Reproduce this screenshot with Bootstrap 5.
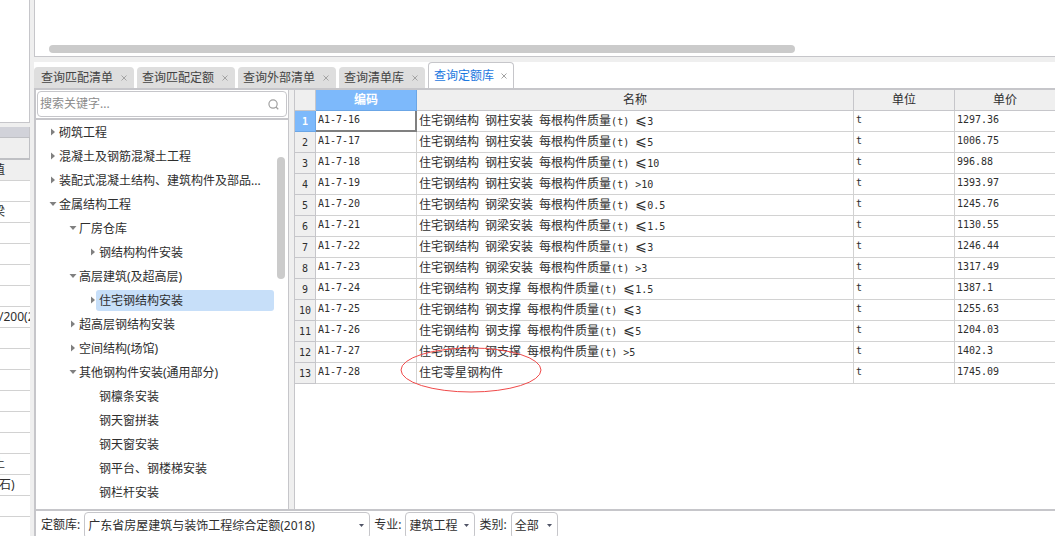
<!DOCTYPE html>
<html lang="zh-CN">
<head>
<meta charset="utf-8">
<meta name="viewport" content="width=device-width, initial-scale=1">
<title>查询定额库</title>
<link href="https://cdn.jsdelivr.net/npm/bootstrap@5.3.0/dist/css/bootstrap.min.css" rel="stylesheet">
<style>
  :root { --line: #c6c6ca; --grid: #d2d2d2; --chrome: #efefef; --accent: #7db9fb; }
  body { font: 12px/20px "Noto Sans", "Noto Sans CJK SC", sans-serif; color: #2e2e2e; background: var(--chrome); }

  /* property strip on the far left */
  .side-strip { width: 30px; white-space: nowrap; }
  .side-top { height: 123px; border-right: 1px solid var(--line); border-bottom: 1px solid var(--line); }
  .side-title { height: 10px; margin-top: 4px; background: #d1d2d9; border-right: 1px solid var(--line); }
  .side-tools { height: 23px; border: 1px solid #bfc0c4; border-left: 0; border-bottom-width: 2px; }
  .side-grid { table-layout: fixed; width: 100%; border-collapse: separate; border-spacing: 0; }
  .side-grid th, .side-grid td { height: 21px; padding: 0; line-height: 20px; font-weight: 400; overflow: hidden; border-bottom: 1px solid var(--grid); background: #fff; }
  .side-grid th { background: var(--chrome); }
  .side-grid span { margin-left: -7px; }
  .side-grid .near span { margin-left: -1px; }
  .splitter { width: 4px; }

  /* upper pane */
  .upper-pane { height: 57px; border-left: 1px solid var(--line); border-bottom: 1px solid var(--line); padding: 0 12px 3px 14px; }
  .h-thumb { width: 75%; height: 8px; border-radius: 4px; background: #cbcbcb; }

  /* query tabs */
  .tab-strip { height: 26px; margin-top: 5px; gap: 3px; }
  .query-tab { height: 21px; gap: 7px; padding: 0 6px 0 5px; background: #dedede; border: 0; border-radius: 4px 4px 0 0; color: #444; line-height: 21px; }
  .query-tab:first-child { padding-left: 7px; }
  .query-tab.active { height: 26px; gap: 6px; padding: 0 5px; background: #fff; border: 1px solid var(--line); border-bottom: 0; color: #1c78e0; line-height: 26px; }
  .query-tab svg { width: 8px; height: 8px; stroke: #a3a3a3; fill: none; }

  .work-area { border-top: 2px solid var(--line); border-left: 2px solid var(--line); min-height: 0; }

  /* tree */
  .tree-pane { width: 253px; border-right: 1px solid var(--line); }
  .search-row { padding: 1px; height: 30px; border-bottom: 2px solid var(--line); }
  .search-box { width: 100%; height: 26px; padding: 0 3px 0 2px; border: 1px solid var(--line); border-radius: 4px; }
  .search-box input { min-width: 0; border: 0; outline: 0; padding: 0; background: none; }
  .search-box input::placeholder { color: #8c8c8c; opacity: 1; }
  .search-box button { border: 0; background: none; padding: 0 4px; line-height: 0; }
  .tree-body { min-height: 0; padding-right: 14px; }
  .tree-list li { height: 24px; }
  .tree-list button { border: 0; background: none; padding: 0 3px; height: 21px; line-height: 21px; border-radius: 3px; color: inherit; text-align: left; white-space: nowrap; flex: 1; }
  .tree-list .picked button { background: #c7dff9; }
  .tree-list svg { width: 8px; height: 8px; fill: #808080; margin-right: -1px; }
  .lv-0 { padding-left: 13px; } .lv-1 { padding-left: 33px; } .lv-2 { padding-left: 53px; }
  .leaf { padding-left: 60px; }
  .v-thumb { position: absolute; top: 37px; right: 3px; width: 8px; height: 122px; border-radius: 4px; background: #cbcbcb; }

  /* quota grid */
  .grid-gap { width: 5px; background: var(--chrome); }
  .grid-pane { min-width: 0; border-left: 1px solid var(--line); }
  .quota { table-layout: fixed; width: 100%; border-collapse: separate; border-spacing: 0; white-space: nowrap; }
  .quota th, .quota td { height: 21px; padding: 0 2px 2px; border-right: 1px solid var(--grid); border-bottom: 1px solid var(--grid); vertical-align: middle; }
  .quota th { background: var(--chrome); border-color: var(--line); font-weight: 400; text-align: center; }
  .quota thead th { padding: 0; line-height: 20px; }
  .quota tbody th { font: 10px/18px "DejaVu Sans Mono", monospace; padding: 2px 0 0; }
  .quota td { font: 10px/18px "DejaVu Sans Mono", monospace; color: #2e2e2e; }
  .quota td.item { font: 12px/18px "Noto Sans CJK SC", sans-serif; white-space: pre; }
  .quota .mono { font: 10px/1 "DejaVu Sans Mono", monospace; }
  .quota .item i { font: 14px/1 "Noto Sans CJK SC", "DejaVu Sans", sans-serif; display: inline-block; width: 12px; height: 12px; line-height: 12px; text-align: center; }
  .quota th.on { background: var(--accent); border-color: #6ba6e6; color: #fff; font-weight: 700; }
  .quota td.current { border-color: #808080; box-shadow: inset -1px -1px #808080; }
  .quota tr > :last-child { border-right: 0; }
  .c-no { width: 21px; } .c-code, .c-unit { width: 101px; } .c-price { width: 100px; }
  .ring { position: absolute; left: -17px; top: -16px; width: 142px; height: 46px; fill: none; stroke: #f04a4a; pointer-events: none; }

  /* filters */
  .filters { height: 27px; border-top: 2px solid var(--line); border-left: 2px solid var(--line); padding: 1px 5px 0; }
  .filters label { line-height: 26px; margin-right: 4px; }
  .filters select { appearance: none; height: 27px; margin-right: 4px; padding: 0 3px; border: 1px solid var(--line); border-radius: 4px; color: inherit;
    background: #fff url("data:image/svg+xml,%3Csvg xmlns='http://www.w3.org/2000/svg' width='5' height='3'%3E%3Cpath d='M0 0h5L2.500 3z' fill='%23505466'/%3E%3C/svg%3E") no-repeat right 5px center; }
  .w-lib { width: 286px; } .w-major { width: 70px; } .w-kind { width: 47px; }
</style>
</head>
<body class="d-flex vh-100 overflow-hidden">
<svg class="d-none">
  <symbol id="x" viewBox="0 0 8 8"><path d="M1.500 1.500l5 5M6.500 1.500l-5 5"/></symbol>
  <symbol id="shut" viewBox="0 0 8 8"><path d="M2 .5v7L6 4z"/></symbol>
  <symbol id="open" viewBox="0 0 8 8"><path d="M.5 2h7L4 6z"/></symbol>
</svg>

<aside class="side-strip flex-shrink-0 overflow-hidden">
  <div class="side-top bg-white"></div>
  <div class="side-title"></div>
  <div class="side-tools"></div>
  <table class="side-grid">
    <thead><tr><th><span>值</span></th></tr></thead>
    <tbody>
      <tr><td></td></tr>
      <tr><td><span>梁</span></td></tr>
      <tr><td></td></tr><tr><td></td></tr><tr><td></td></tr><tr><td></td></tr>
      <tr><td class="near"><span>/200(2</span></td></tr>
      <tr><td></td></tr><tr><td></td></tr><tr><td></td></tr><tr><td></td></tr><tr><td></td></tr><tr><td></td></tr>
      <tr><td><span>土</span></td></tr>
      <tr><td class="near"><span>石)</span></td></tr>
      <tr><td></td></tr><tr><td></td></tr>
    </tbody>
  </table>
</aside>
<div class="splitter flex-shrink-0"></div>

<main class="d-flex flex-column flex-grow-1 overflow-hidden">
  <section class="upper-pane bg-white d-flex align-items-end flex-shrink-0"><div class="h-thumb"></div></section>

  <nav class="tab-strip bg-white d-flex align-items-end flex-shrink-0">
    <button class="query-tab d-flex align-items-center">查询匹配清单<svg><use href="#x"/></svg></button>
    <button class="query-tab d-flex align-items-center">查询匹配定额<svg><use href="#x"/></svg></button>
    <button class="query-tab d-flex align-items-center">查询外部清单<svg><use href="#x"/></svg></button>
    <button class="query-tab d-flex align-items-center">查询清单库<svg><use href="#x"/></svg></button>
    <button class="query-tab active d-flex align-items-center">查询定额库<svg><use href="#x"/></svg></button>
  </nav>

  <div class="work-area d-flex flex-grow-1 bg-white">
    <section class="tree-pane d-flex flex-column flex-shrink-0">
      <div class="search-row flex-shrink-0">
        <div class="search-box d-flex align-items-center">
          <input class="flex-grow-1" type="text" placeholder="搜索关键字..." aria-label="搜索关键字">
          <button aria-label="搜索"><svg width="11" height="11" viewBox="0 0 12 12" fill="none" stroke="#a0a0a0" stroke-width="1.300"><circle cx="5.500" cy="5.500" r="4.500"/><path d="M8.700 8.700l2.500 2.500"/></svg></button>
        </div>
      </div>
      <div class="tree-body position-relative flex-grow-1 overflow-hidden">
        <ul class="tree-list list-unstyled mb-0">
          <li class="lv-0 d-flex align-items-center"><svg><use href="#shut"/></svg><button>砌筑工程</button></li>
          <li class="lv-0 d-flex align-items-center"><svg><use href="#shut"/></svg><button>混凝土及钢筋混凝土工程</button></li>
          <li class="lv-0 d-flex align-items-center"><svg><use href="#shut"/></svg><button>装配式混凝土结构、建筑构件及部品...</button></li>
          <li class="lv-0 d-flex align-items-center"><svg><use href="#open"/></svg><button>金属结构工程</button></li>
          <li class="lv-1 d-flex align-items-center"><svg><use href="#open"/></svg><button>厂房仓库</button></li>
          <li class="lv-2 d-flex align-items-center"><svg><use href="#shut"/></svg><button>钢结构构件安装</button></li>
          <li class="lv-1 d-flex align-items-center"><svg><use href="#open"/></svg><button>高层建筑(及超高层)</button></li>
          <li class="lv-2 picked d-flex align-items-center"><svg><use href="#shut"/></svg><button>住宅钢结构安装</button></li>
          <li class="lv-1 d-flex align-items-center"><svg><use href="#shut"/></svg><button>超高层钢结构安装</button></li>
          <li class="lv-1 d-flex align-items-center"><svg><use href="#shut"/></svg><button>空间结构(场馆)</button></li>
          <li class="lv-1 d-flex align-items-center"><svg><use href="#open"/></svg><button>其他钢构件安装(通用部分)</button></li>
          <li class="leaf d-flex align-items-center"><button>钢檩条安装</button></li>
          <li class="leaf d-flex align-items-center"><button>钢天窗拼装</button></li>
          <li class="leaf d-flex align-items-center"><button>钢天窗安装</button></li>
          <li class="leaf d-flex align-items-center"><button>钢平台、钢楼梯安装</button></li>
          <li class="leaf d-flex align-items-center"><button>钢栏杆安装</button></li>
        </ul>
        <div class="v-thumb"></div>
      </div>
    </section>
    <div class="grid-gap flex-shrink-0"></div>
    <section class="grid-pane flex-grow-1 overflow-hidden">
      <table class="quota">
        <colgroup><col class="c-no"><col class="c-code"><col><col class="c-unit"><col class="c-price"></colgroup>
        <thead><tr><th></th><th class="on">编码</th><th>名称</th><th>单位</th><th>单价</th></tr></thead>
        <tbody>
          <tr><th class="on">1</th><td class="current">A1-7-16</td><td class="item">住宅钢结构<span class="mono"> </span>钢柱安装<span class="mono"> </span>每根构件质量<span class="mono">(t) </span><i>⩽</i><span class="mono">3</span></td><td>t</td><td>1297.36</td></tr>
          <tr><th>2</th><td>A1-7-17</td><td class="item">住宅钢结构<span class="mono"> </span>钢柱安装<span class="mono"> </span>每根构件质量<span class="mono">(t) </span><i>⩽</i><span class="mono">5</span></td><td>t</td><td>1006.75</td></tr>
          <tr><th>3</th><td>A1-7-18</td><td class="item">住宅钢结构<span class="mono"> </span>钢柱安装<span class="mono"> </span>每根构件质量<span class="mono">(t) </span><i>⩽</i><span class="mono">10</span></td><td>t</td><td>996.88</td></tr>
          <tr><th>4</th><td>A1-7-19</td><td class="item">住宅钢结构<span class="mono"> </span>钢柱安装<span class="mono"> </span>每根构件质量<span class="mono">(t) &gt;10</span></td><td>t</td><td>1393.97</td></tr>
          <tr><th>5</th><td>A1-7-20</td><td class="item">住宅钢结构<span class="mono"> </span>钢梁安装<span class="mono"> </span>每根构件质量<span class="mono">(t) </span><i>⩽</i><span class="mono">0.5</span></td><td>t</td><td>1245.76</td></tr>
          <tr><th>6</th><td>A1-7-21</td><td class="item">住宅钢结构<span class="mono"> </span>钢梁安装<span class="mono"> </span>每根构件质量<span class="mono">(t) </span><i>⩽</i><span class="mono">1.5</span></td><td>t</td><td>1130.55</td></tr>
          <tr><th>7</th><td>A1-7-22</td><td class="item">住宅钢结构<span class="mono"> </span>钢梁安装<span class="mono"> </span>每根构件质量<span class="mono">(t) </span><i>⩽</i><span class="mono">3</span></td><td>t</td><td>1246.44</td></tr>
          <tr><th>8</th><td>A1-7-23</td><td class="item">住宅钢结构<span class="mono"> </span>钢梁安装<span class="mono"> </span>每根构件质量<span class="mono">(t) &gt;3</span></td><td>t</td><td>1317.49</td></tr>
          <tr><th>9</th><td>A1-7-24</td><td class="item">住宅钢结构<span class="mono"> </span>钢支撑<span class="mono"> </span>每根构件质量<span class="mono">(t) </span><i>⩽</i><span class="mono">1.5</span></td><td>t</td><td>1387.1</td></tr>
          <tr><th>10</th><td>A1-7-25</td><td class="item">住宅钢结构<span class="mono"> </span>钢支撑<span class="mono"> </span>每根构件质量<span class="mono">(t) </span><i>⩽</i><span class="mono">3</span></td><td>t</td><td>1255.63</td></tr>
          <tr><th>11</th><td>A1-7-26</td><td class="item">住宅钢结构<span class="mono"> </span>钢支撑<span class="mono"> </span>每根构件质量<span class="mono">(t) </span><i>⩽</i><span class="mono">5</span></td><td>t</td><td>1204.03</td></tr>
          <tr><th>12</th><td>A1-7-27</td><td class="item">住宅钢结构<span class="mono"> </span>钢支撑<span class="mono"> </span>每根构件质量<span class="mono">(t) &gt;5</span></td><td>t</td><td>1402.3</td></tr>
          <tr><th>13</th><td>A1-7-28</td><td class="item position-relative">住宅零星钢构件<svg class="ring" viewBox="0 0 142 46"><ellipse cx="71" cy="23" rx="70" ry="22"/></svg></td><td>t</td><td>1745.09</td></tr>
        </tbody>
      </table>
    </section>
  </div>

  <form class="filters bg-white d-flex flex-shrink-0">
    <label for="lib">定额库:</label><select id="lib" class="w-lib"><option>广东省房屋建筑与装饰工程综合定额(2018)</option></select>
    <label for="major">专业:</label><select id="major" class="w-major"><option>建筑工程</option></select>
    <label for="kind">类别:</label><select id="kind" class="w-kind"><option>全部</option></select>
  </form>
</main>
<script src="https://cdn.jsdelivr.net/npm/bootstrap@5.3.0/dist/js/bootstrap.bundle.min.js"></script>
</body>
</html>
